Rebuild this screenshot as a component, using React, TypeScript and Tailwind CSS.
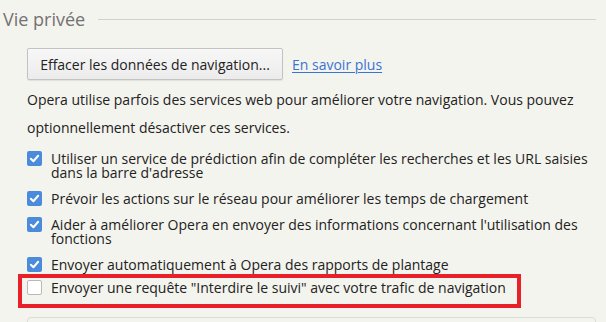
import React from "react";

const items = [
  { text: "Utiliser un service de prédiction afin de compléter les recherches et les URL saisies dans la barre d'adresse", checked: true },
  { text: "Prévoir les actions sur le réseau pour améliorer les temps de chargement", checked: true },
  { text: "Aider à améliorer Opera en envoyer des informations concernant l'utilisation des fonctions", checked: true },
  { text: "Envoyer automatiquement à Opera des rapports de plantage", checked: true },
];

function Checkbox({ checked }: { checked: boolean }) {
  if (!checked) {
    return <span className="-mt-px -mb-px block h-[15px] w-[15px] shrink-0 rounded-[2px] border border-[#b9b9b6] bg-white" />;
  }
  return (
    <span className="-mt-px -mb-px flex h-[15px] w-[15px] shrink-0 items-center justify-center rounded-[2px] bg-[#4a8bdc]">
      <svg viewBox="0 0 12 12" className="h-[11px] w-[11px]">
        <path d="M2 6.3 L4.8 9 L10 3" fill="none" stroke="white" strokeWidth="2.2" strokeLinecap="round" strokeLinejoin="round" />
      </svg>
    </span>
  );
}

function Row({ text, checked }: { text: string; checked: boolean }) {
  return (
    <div className="flex items-start gap-[9px] pb-[12px] pr-[14px]">
      <Checkbox checked={checked} />
      <span className="leading-[14px]">{text}</span>
    </div>
  );
}

export default function App() {
  return (
    <div className="h-[322px] w-[606px] overflow-hidden bg-[#f4f4ee] text-[14px] text-[#222] font-['Open_Sans',sans-serif]">
      <div className="flex items-center gap-[13px] pl-[3px] pr-[10px] pt-[8px]">
        <h2 className="text-[18px] leading-[22px] text-[#727272]">Vie privée</h2>
        <div className="h-px flex-1 bg-[#d2d2cc]" />
      </div>

      <div className="pl-[27px]">
        <div className="mt-[18px] flex items-center gap-[9px]">
          <button className="h-[32px] w-[256px] rounded-[2px] border border-[#c3c3c0] bg-gradient-to-b from-[#f7f7f7] to-[#ececec] text-[14px] text-[#222] shadow-[0_1px_1px_rgba(0,0,0,0.08)]">
            Effacer les données de navigation...
          </button>
          <a href="#" className="text-[#3a73d3] underline underline-offset-2">En savoir plus</a>
        </div>

        <p className="mt-[6px] pr-[14px] leading-[28px]">
          Opera utilise parfois des services web pour améliorer votre navigation. Vous pouvez optionnellement désactiver ces services.
        </p>

        <div className="mt-[10px]">
          {items.map((it) => (
            <Row key={it.text} text={it.text} checked={it.checked} />
          ))}
          <div className="relative mt-[-3px]">
            <Row text={'Envoyer une requête "Interdire le suivi" avec votre trafic de navigation'} checked={false} />
            <span className="pointer-events-none absolute left-[-9px] top-[-7px] h-[34px] w-[503px] border-[4px] border-[#e8202a]" />
          </div>
        </div>

        <div className="mr-[10px] mt-[10px] h-[40px] rounded-[4px] border border-[#dcdcd6]" />
      </div>
    </div>
  );
}
